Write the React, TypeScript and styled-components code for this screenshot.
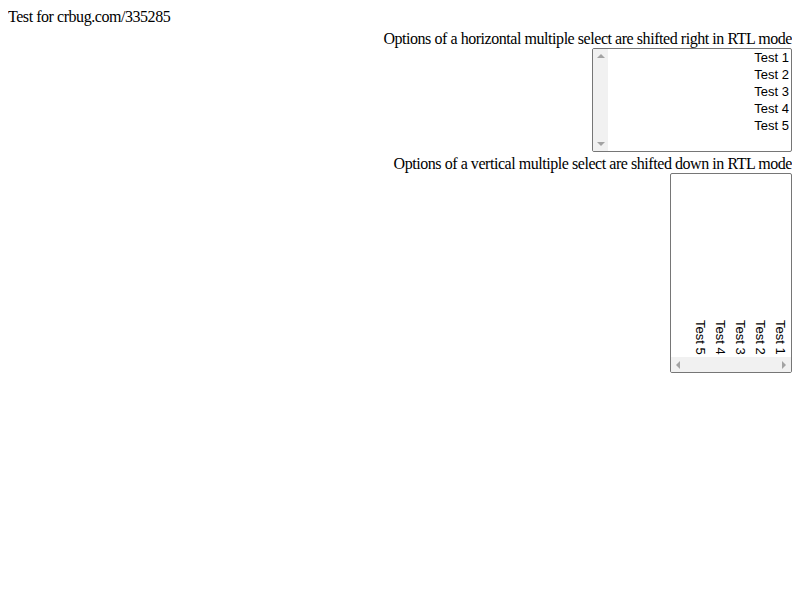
import React from 'react'
import { styled, createGlobalStyle } from 'styled-components'

const options = ['Test 1', 'Test 2', 'Test 3', 'Test 4', 'Test 5']

const GlobalStyle = createGlobalStyle`
    html, body {
        background: #fff;
    }
    body {
        margin: 8px;
        font-family: "Liberation Serif", "Times New Roman", serif;
        font-size: 16px;
        line-height: 18px;
        letter-spacing: -0.45px;
        color: #000;
    }
`

const App = () => {
  return (
    <>
        <GlobalStyle />
        <Title>Test for crbug.com/335285</Title>
        <RtlSection dir='rtl'>
            <Caption>Options of a horizontal multiple select are shifted right in RTL mode</Caption>
            <HorizontalBox>
                <VScrollbar>
                    <Arrow $dir='up' />
                    <Arrow $dir='down' />
                </VScrollbar>
                <HOptions>
                    {options.map(o => <HOption key={o}>{o}</HOption>)}
                </HOptions>
            </HorizontalBox>
            <Caption $gap={3}>Options of a vertical multiple select are shifted down in RTL mode</Caption>
            <VerticalBox>
                <VOptions>
                    {options.map(o => <VOption key={o}>{o}</VOption>)}
                </VOptions>
                <HScrollbar>
                    <Arrow $dir='left' />
                    <Arrow $dir='right' />
                </HScrollbar>
            </VerticalBox>
        </RtlSection>
    </>
  )
}

export default App;

const Title = styled.div`
    height: 18px;
`

const RtlSection = styled.div`
    direction: rtl;
    display: flex;
    flex-direction: column;
    align-items: flex-start;
    margin-top: 4px;
`

const Caption = styled.div<{ $gap?: number }>`
    height: 18px;
    margin-top: ${p => p.$gap ?? 0}px;
    white-space: nowrap;
`

const Box = styled.div`
    box-sizing: border-box;
    border: 1px solid #767676;
    border-radius: 2px;
    background: #fff;
    display: flex;
    direction: ltr;
    overflow: hidden;
    font-family: "Liberation Sans", Arial, sans-serif;
    font-size: 13px;
    letter-spacing: 0;
`

const HorizontalBox = styled(Box)`
    width: 200px;
    height: 104px;
    flex-direction: row;
`

const VerticalBox = styled(Box)`
    width: 122px;
    height: 200px;
    flex-direction: column;
`

const VScrollbar = styled.div`
    width: 15px;
    background: #f1f1f1;
    display: flex;
    flex-direction: column;
    justify-content: space-between;
    align-items: center;
    padding: 5px 0;
`

const HScrollbar = styled.div`
    height: 15px;
    background: #f1f1f1;
    display: flex;
    flex-direction: row;
    justify-content: space-between;
    align-items: center;
    padding: 0 5px;
`

const Arrow = styled.span<{ $dir: 'up' | 'down' | 'left' | 'right' }>`
    width: 0;
    height: 0;
    border: 4px solid transparent;
    ${p => p.$dir === 'up' && `border-bottom-color: #a3a3a3; border-top-width: 0;`}
    ${p => p.$dir === 'down' && `border-top-color: #a3a3a3; border-bottom-width: 0;`}
    ${p => p.$dir === 'left' && `border-right-color: #a3a3a3; border-left-width: 0;`}
    ${p => p.$dir === 'right' && `border-left-color: #a3a3a3; border-right-width: 0;`}
`

const HOptions = styled.div`
    flex: 1;
    direction: rtl;
    text-align: right;
`

const HOption = styled.div`
    height: 17px;
    line-height: 17px;
    padding: 0 2px;
`

const VOptions = styled.div`
    flex: 1;
    writing-mode: vertical-rl;
    direction: rtl;
    padding-right: 1px;
`

const VOption = styled.div`
    width: 20px;
    line-height: 20px;
    padding-inline: 2px;
`
